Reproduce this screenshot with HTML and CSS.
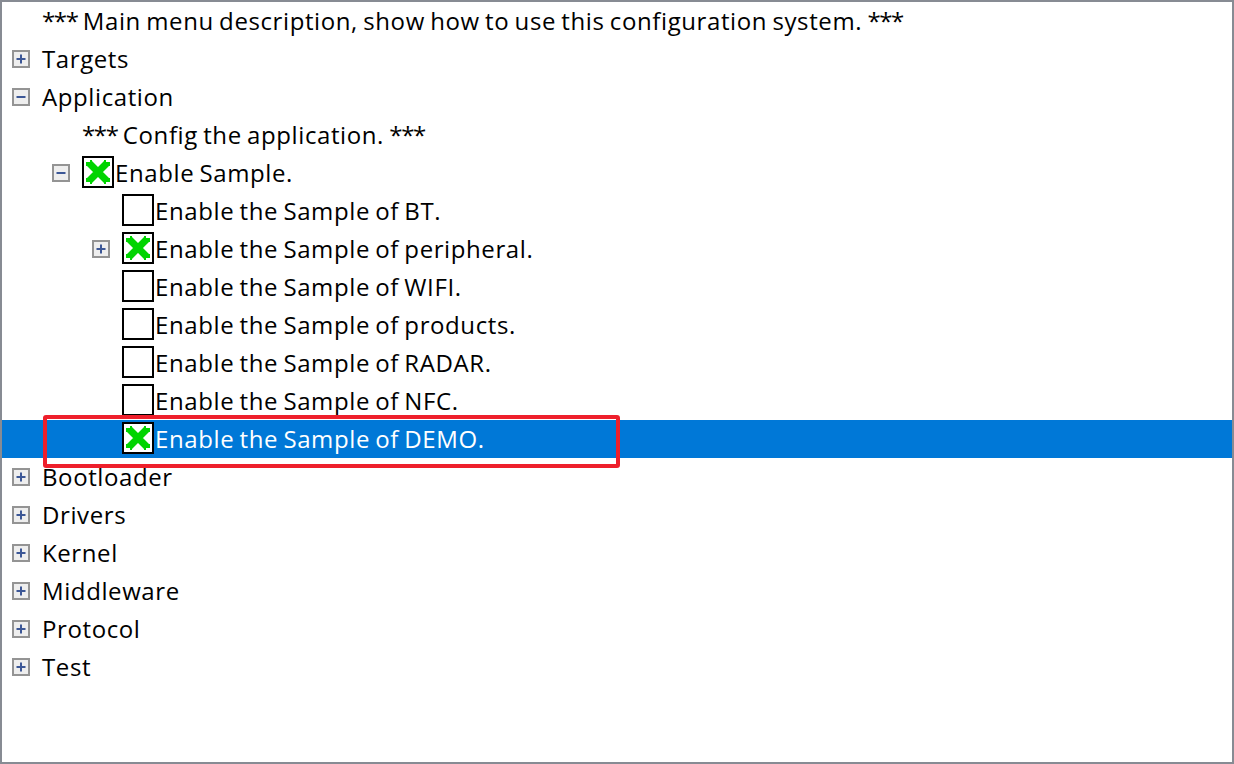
FILE: index.html
```html
<!DOCTYPE html>
<html>
<head>
<meta charset="utf-8">
<link rel="stylesheet" href="styles.css">
</head>
<body>
<div class="tree">
  <div class="row lvl0"><span class="exp none"></span><span class="label"><span class="ast">***</span> Main menu description, show how to use this configuration system. <span class="ast">***</span></span></div>
  <div class="row lvl0"><span class="exp"><svg viewBox="0 0 18 18"><rect x="1" y="1" width="16" height="16" class="eb"/><path d="M4.5 9h9M9 4.5v9" class="es"/></svg></span><span class="label">Targets</span></div>
  <div class="row lvl0"><span class="exp"><svg viewBox="0 0 18 18"><rect x="1" y="1" width="16" height="16" class="eb"/><path d="M4.5 9h9" class="es"/></svg></span><span class="label">Application</span></div>
  <div class="row lvl1"><span class="exp none"></span><span class="label"><span class="ast">***</span> Config the application. <span class="ast">***</span></span></div>
  <div class="row lvl1"><span class="exp"><svg viewBox="0 0 18 18"><rect x="1" y="1" width="16" height="16" class="eb"/><path d="M4.5 9h9" class="es"/></svg></span><span class="chk"><svg viewBox="0 0 28 28"><path class="xs" d="M5 5L23 23M23 5L5 23"/><path class="xf" d="M2 4h4v-2h2v4h-2v2h-4zM26 4h-4v-2h-2v4h2v2h4zM2 24h4v2h2v-4h-2v-2h-4zM26 24h-4v2h-2v-4h2v-2h4z"/></svg></span><span class="label">Enable Sample.</span></div>
  <div class="row lvl2"><span class="exp none"></span><span class="chk"></span><span class="label">Enable the Sample of BT.</span></div>
  <div class="row lvl2"><span class="exp"><svg viewBox="0 0 18 18"><rect x="1" y="1" width="16" height="16" class="eb"/><path d="M4.5 9h9M9 4.5v9" class="es"/></svg></span><span class="chk"><svg viewBox="0 0 28 28"><path class="xs" d="M5 5L23 23M23 5L5 23"/><path class="xf" d="M2 4h4v-2h2v4h-2v2h-4zM26 4h-4v-2h-2v4h2v2h4zM2 24h4v2h2v-4h-2v-2h-4zM26 24h-4v2h-2v-4h2v-2h4z"/></svg></span><span class="label">Enable the Sample of peripheral.</span></div>
  <div class="row lvl2"><span class="exp none"></span><span class="chk"></span><span class="label">Enable the Sample of WIFI.</span></div>
  <div class="row lvl2"><span class="exp none"></span><span class="chk"></span><span class="label">Enable the Sample of products.</span></div>
  <div class="row lvl2"><span class="exp none"></span><span class="chk"></span><span class="label">Enable the Sample of RADAR.</span></div>
  <div class="row lvl2"><span class="exp none"></span><span class="chk"></span><span class="label">Enable the Sample of NFC.</span></div>
  <div class="row lvl2 selected"><span class="exp none"></span><span class="chk"><svg viewBox="0 0 28 28"><path class="xs" d="M5 5L23 23M23 5L5 23"/><path class="xf" d="M2 4h4v-2h2v4h-2v2h-4zM26 4h-4v-2h-2v4h2v2h4zM2 24h4v2h2v-4h-2v-2h-4zM26 24h-4v2h-2v-4h2v-2h4z"/></svg></span><span class="label">Enable the Sample of DEMO.</span><span class="mark"></span></div>
  <div class="row lvl0"><span class="exp"><svg viewBox="0 0 18 18"><rect x="1" y="1" width="16" height="16" class="eb"/><path d="M4.5 9h9M9 4.5v9" class="es"/></svg></span><span class="label">Bootloader</span></div>
  <div class="row lvl0"><span class="exp"><svg viewBox="0 0 18 18"><rect x="1" y="1" width="16" height="16" class="eb"/><path d="M4.5 9h9M9 4.5v9" class="es"/></svg></span><span class="label">Drivers</span></div>
  <div class="row lvl0"><span class="exp"><svg viewBox="0 0 18 18"><rect x="1" y="1" width="16" height="16" class="eb"/><path d="M4.5 9h9M9 4.5v9" class="es"/></svg></span><span class="label">Kernel</span></div>
  <div class="row lvl0"><span class="exp"><svg viewBox="0 0 18 18"><rect x="1" y="1" width="16" height="16" class="eb"/><path d="M4.5 9h9M9 4.5v9" class="es"/></svg></span><span class="label">Middleware</span></div>
  <div class="row lvl0"><span class="exp"><svg viewBox="0 0 18 18"><rect x="1" y="1" width="16" height="16" class="eb"/><path d="M4.5 9h9M9 4.5v9" class="es"/></svg></span><span class="label">Protocol</span></div>
  <div class="row lvl0"><span class="exp"><svg viewBox="0 0 18 18"><rect x="1" y="1" width="16" height="16" class="eb"/><path d="M4.5 9h9M9 4.5v9" class="es"/></svg></span><span class="label">Test</span></div>
</div>
</body>
</html>
```

FILE: styles.css
```css
html, body {
  margin: 0;
  padding: 0;
  background: #ffffff;
}
.tree {
  box-sizing: border-box;
  width: 1234px;
  height: 764px;
  border: 2px solid #878b93;
  background: #ffffff;
  font-family: "Open Sans", "Noto Sans", sans-serif;
  font-size: 24px;
  letter-spacing: 0.6px;
  word-spacing: -1.5px;
  color: #000000;
}
.row {
  position: relative;
  display: flex;
  align-items: center;
  height: 38px;
  white-space: nowrap;
}
.lvl0 { padding-left: 10px; }
.lvl1 { padding-left: 50px; }
.lvl2 { padding-left: 90px; }
.exp {
  width: 18px;
  height: 18px;
  margin-right: 12px;
  flex: none;
  display: flex;
}
.exp svg { width: 18px; height: 18px; }
.eb {
  fill: #eeeeee;
  stroke: #949494;
  stroke-width: 2;
}
.es {
  stroke: #3c5796;
  stroke-width: 2;
  fill: none;
}
.chk {
  box-sizing: border-box;
  width: 32px;
  height: 32px;
  border: 2px solid #000000;
  background: #ffffff;
  margin-right: 1px;
  margin-top: -3px;
  flex: none;
  display: flex;
}
.chk svg { width: 28px; height: 28px; }
.xs {
  stroke: #00d400;
  stroke-width: 7;
  fill: none;
}
.xf { fill: #00d400; }
.label {
  line-height: 38px;
}
.ast {
  letter-spacing: -1.4px;
}
.selected {
  background: #0078d7;
  color: #ffffff;
}
.mark {
  position: absolute;
  left: 41px;
  top: -5px;
  width: 577px;
  height: 53px;
  box-sizing: border-box;
  border: 4px solid #ee1f2b;
  border-radius: 3px;
}
```
